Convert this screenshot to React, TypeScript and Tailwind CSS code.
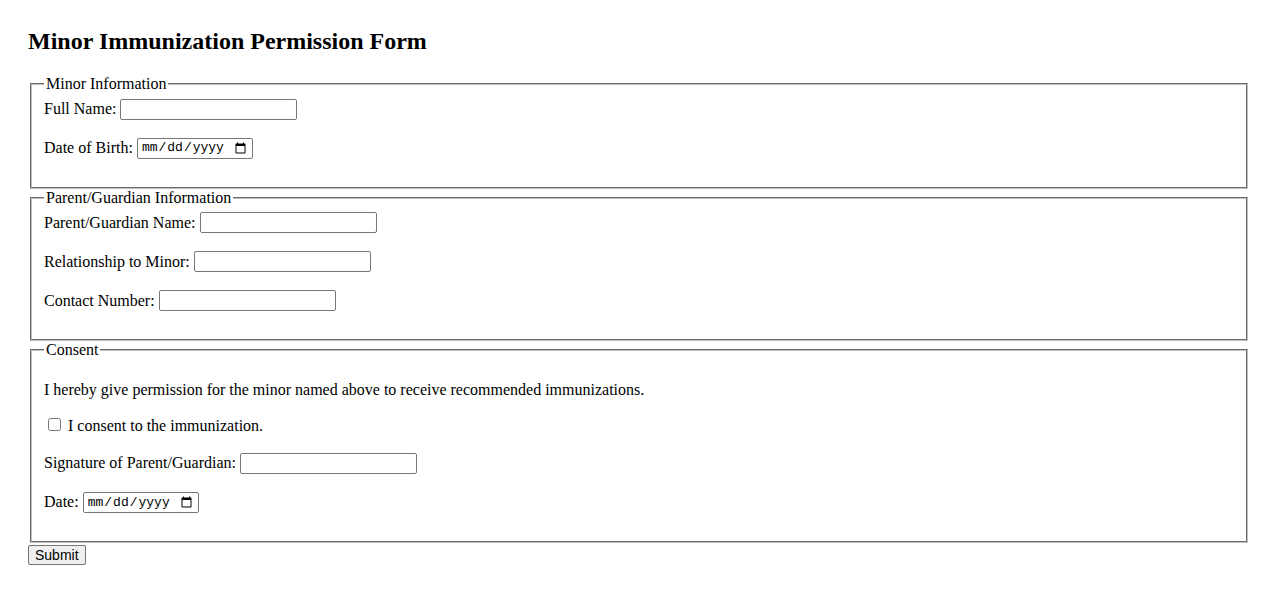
import React from "react";

const textInput =
  "h-[21px] w-[177px] rounded-[2px] border border-[#767676] bg-white px-[2px] font-['Liberation_Sans',sans-serif] text-[13.33px] text-black outline-none";
const dateInput =
  "h-[21px] w-[116px] rounded-[2px] border border-[#767676] bg-white px-[3px] font-['Liberation_Mono',monospace] text-[13px] text-black outline-none";
const fieldsetCls =
  "mx-[2px] border-2 [border-style:groove] border-[#c0c0c0] px-[12px] pt-[5.6px] pb-[10px]";

function Row({ label, children }: { label: string; children: React.ReactNode }) {
  return (
    <div className="mb-[18px] flex h-[21px] items-center gap-[4px]">
      <label className="leading-[18px] whitespace-nowrap">{label}</label>
      {children}
    </div>
  );
}

export default function App() {
  return (
    <div className="min-h-screen bg-white px-[28px] pt-[28px] font-['Liberation_Serif',serif] text-[16px] text-black">
      <h2 className="mb-[20px] text-[24px] leading-[27px] font-bold">Minor Immunization Permission Form</h2>

      <form onSubmit={(e) => e.preventDefault()}>
        <fieldset className={fieldsetCls}>
          <legend className="px-[2px] leading-[18px]">Minor Information</legend>
          <Row label="Full Name:">
            <input type="text" className={textInput} />
          </Row>
          <Row label="Date of Birth:">
            <input type="date" className={dateInput} />
          </Row>
        </fieldset>

        <fieldset className={fieldsetCls}>
          <legend className="px-[2px] leading-[18px]">Parent/Guardian Information</legend>
          <Row label="Parent/Guardian Name:">
            <input type="text" className={textInput} />
          </Row>
          <Row label="Relationship to Minor:">
            <input type="text" className={textInput} />
          </Row>
          <Row label="Contact Number:">
            <input type="tel" className={textInput} />
          </Row>
        </fieldset>

        <fieldset className={fieldsetCls}>
          <legend className="px-[2px] leading-[18px]">Consent</legend>
          <p className="my-[16px] leading-[18px]">
            I hereby give permission for the minor named above to receive recommended immunizations.
          </p>
          <div className="mb-[18px] flex h-[20px] items-center">
            <input type="checkbox" id="consent" className="m-[3px_3px_3px_4px] h-[13px] w-[13px]" />
            <label htmlFor="consent" className="mt-[2px] ml-[4px] leading-[18px]">
              I consent to the immunization.
            </label>
          </div>
          <Row label="Signature of Parent/Guardian:">
            <input type="text" className={textInput} />
          </Row>
          <Row label="Date:">
            <input type="date" className={dateInput} />
          </Row>
        </fieldset>

        <button
          type="submit"
          className="mt-[1px] h-[20px] rounded-[2px] border border-[#767676] bg-[#efefef] px-[6px] font-['Liberation_Sans',sans-serif] text-[14px] leading-[16px] text-black"
        >
          Submit
        </button>
      </form>
    </div>
  );
}
